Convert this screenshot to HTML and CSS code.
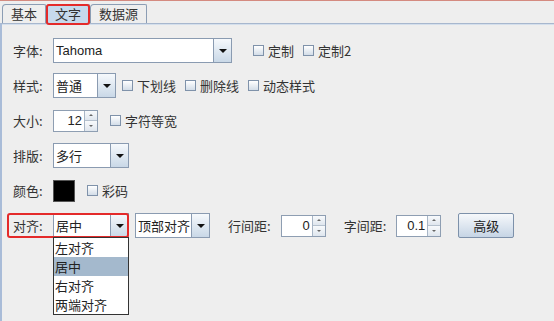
FILE: index.html
```html
<!DOCTYPE html>
<html lang="zh">
<head>
  <meta charset="UTF-8">
  <title>文字</title>
  <link rel="stylesheet" href="styles.css">
</head>
<body>

  <div class="tabs">
    <div class="tab">基本</div>
    <div class="tab active">文字</div>
    <div class="tab">数据源</div>
  </div>

  <div class="panel">
    <div class="row">
      <span class="label">字体:</span>
      <div class="combo w-font">
        <span class="combo-text latin">Tahoma</span>
        <span class="combo-btn"><i class="tri"></i></span>
      </div>
      <label class="check first-wide"><span class="box"></span>定制</label>
      <label class="check"><span class="box"></span>定制2</label>
    </div>

    <div class="row">
      <span class="label">样式:</span>
      <div class="combo w-style">
        <span class="combo-text">普通</span>
        <span class="combo-btn"><i class="tri"></i></span>
      </div>
      <label class="check first-near"><span class="box"></span>下划线</label>
      <label class="check"><span class="box"></span>删除线</label>
      <label class="check"><span class="box"></span>动态样式</label>
    </div>

    <div class="row">
      <span class="label">大小:</span>
      <div class="spin">
        <span class="spin-val latin">12</span>
        <span class="spin-arrows"><span><i class="up"></i></span><span><i class="down"></i></span></span>
      </div>
      <label class="check first"><span class="box"></span>字符等宽</label>
    </div>

    <div class="row">
      <span class="label">排版:</span>
      <div class="combo w-layout">
        <span class="combo-text">多行</span>
        <span class="combo-btn"><i class="tri"></i></span>
      </div>
    </div>

    <div class="row">
      <span class="label">颜色:</span>
      <span class="swatch"></span>
      <label class="check first"><span class="box"></span>彩码</label>
    </div>

    <div class="row">
      <div class="mark">
        <span class="label">对齐:</span>
        <div class="combo w-align">
          <span class="combo-text">居中</span>
          <span class="combo-btn"><i class="tri"></i></span>
          <ul class="list">
            <li>左对齐</li>
            <li class="selected">居中</li>
            <li>右对齐</li>
            <li>两端对齐</li>
          </ul>
        </div>
      </div>
      <div class="combo w-valign">
        <span class="combo-text">顶部对齐</span>
        <span class="combo-btn"><i class="tri"></i></span>
      </div>
      <span class="sub-label">行间距:</span>
      <div class="spin">
        <span class="spin-val latin">0</span>
        <span class="spin-arrows"><span><i class="up"></i></span><span><i class="down"></i></span></span>
      </div>
      <span class="sub-label">字间距:</span>
      <div class="spin">
        <span class="spin-val latin">0.1</span>
        <span class="spin-arrows"><span><i class="up"></i></span><span><i class="down"></i></span></span>
      </div>
      <button class="btn">高级</button>
    </div>
  </div>

</body>
</html>
```

FILE: styles.css
```css
* {
  box-sizing: border-box;
}

body {
  margin: 0;
  height: 321px;
  overflow: hidden;
  background-color: #eeeeee;
  border-top: 1px solid #d48a80;
  font-family: "Noto Sans CJK SC", sans-serif;
  font-size: 13px;
  color: #222;
}

.latin {
  font-family: "Liberation Sans", Arial, sans-serif;
  font-size: 13px;
}

/* tabs */
.tabs {
  display: flex;
  align-items: flex-end;
  height: 22px;
  padding-left: 2px;
}

.tab {
  height: 19px;
  padding: 0 8px;
  border: 1px solid #8b9db4;
  border-bottom: none;
  border-radius: 4px 2px 0 0;
  line-height: 17px;
  color: #333;
  background-color: #eeeeee;
}

.tab.active {
  position: relative;
  background-color: #c6d9ec;
}

.tab.active::after {
  content: "";
  position: absolute;
  top: -1px;
  left: -1px;
  right: -1px;
  bottom: -2px;
  border: 2px solid #e42a2a;
  border-radius: 3px;
}

/* content */
.panel {
  height: 298px;
  padding: 9px 0 0 11px;
  border-top: 1px solid #a7b7ce;
  border-left: 2px solid #a9bcd8;
  box-shadow: inset 0 1px 0 #d4dfec;
}

.row {
  display: flex;
  align-items: center;
  height: 35px;
}

.label {
  flex: none;
  width: 40px;
  color: #333;
}

.sub-label {
  margin: 0 10px 0 18px;
  color: #333;
}

/* combo box */
.combo {
  position: relative;
  display: flex;
  height: 25px;
  border: 1px solid #8a9bb1;
  background-color: #fff;
}

.combo-text {
  flex: 1;
  padding-left: 2px;
  line-height: 23px;
  white-space: nowrap;
}

.combo-btn {
  flex: none;
  width: 18px;
  display: flex;
  align-items: center;
  justify-content: center;
  border-left: 1px solid #8a9bb1;
  background: linear-gradient(#f6f9fc, #c9d8e7);
}

.tri {
  border-left: 4px solid transparent;
  border-right: 4px solid transparent;
  border-top: 4px solid #111;
}

.w-font { width: 179px; }
.w-style { width: 63px; }
.w-layout { width: 76px; }
.w-align { width: 76px; }
.w-valign { width: 75px; margin-left: 6px; }

.list {
  position: absolute;
  top: 100%;
  left: -1px;
  right: -1px;
  margin: 0;
  padding: 0;
  list-style: none;
  border: 1px solid #333;
  background-color: #fff;
  z-index: 2;
}

.list li {
  height: 19px;
  padding-left: 1px;
  line-height: 19px;
}

.list li.selected {
  background-color: #a4b9cd;
}

/* red highlight round the align row */
.mark {
  position: relative;
  display: flex;
  align-items: center;
  margin-left: -6px;
  padding-left: 6px;
}

.mark::after {
  content: "";
  position: absolute;
  top: 0;
  left: 0;
  right: 0;
  bottom: 0;
  border: 2px solid #e42a2a;
  border-radius: 3px;
  pointer-events: none;
}

/* checkbox */
.check {
  display: flex;
  align-items: center;
  gap: 4px;
  margin-left: 9px;
  color: #333;
}

.check.first-wide { margin-left: 21px; }
.check.first-near { margin-left: 6px; }
.check.first { margin-left: 12px; }

.box {
  width: 11px;
  height: 11px;
  border: 1px solid #7f92aa;
  background: linear-gradient(#ffffff, #d3dde8);
}

/* spinner */
.spin {
  display: flex;
  width: 45px;
  height: 22px;
  border: 1px solid #8e9eb2;
  background-color: #fff;
}

.spin-val {
  flex: 1;
  padding-right: 2px;
  text-align: right;
  line-height: 20px;
}

.spin-arrows {
  flex: none;
  width: 13px;
  display: flex;
  flex-direction: column;
  border-left: 1px solid #a8b6c6;
}

.spin-arrows span {
  flex: 1;
  display: flex;
  align-items: center;
  justify-content: center;
  background: linear-gradient(#f8fafc, #dfe6ee);
}

.spin-arrows span + span {
  border-top: 1px solid #b5c1ce;
}

.up {
  border-left: 2px solid transparent;
  border-right: 2px solid transparent;
  border-bottom: 2px solid #666;
}

.down {
  border-left: 2px solid transparent;
  border-right: 2px solid transparent;
  border-top: 2px solid #666;
}

.swatch {
  width: 22px;
  height: 22px;
  border: 1px solid #555;
  background-color: #000;
}

.btn {
  width: 56px;
  height: 25px;
  margin-left: 17px;
  padding: 0;
  border: 1px solid #7d91aa;
  border-radius: 2px;
  background: linear-gradient(#f6f8fb, #c6d5e5);
  font-family: "Noto Sans CJK SC", sans-serif;
  font-size: 13px;
  color: #222;
}
```
